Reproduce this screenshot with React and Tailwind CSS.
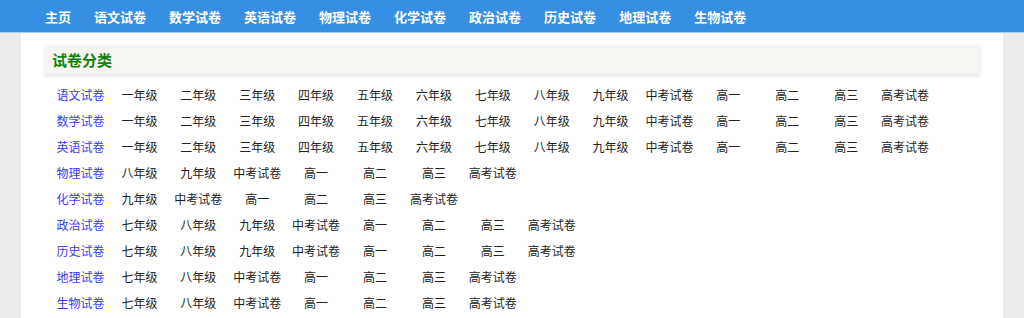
const navItems = ['主页', '语文试卷', '数学试卷', '英语试卷', '物理试卷', '化学试卷', '政治试卷', '历史试卷', '地理试卷', '生物试卷'];

const primary = ['一年级', '二年级', '三年级', '四年级', '五年级', '六年级', '七年级', '八年级', '九年级', '中考试卷', '高一', '高二', '高三', '高考试卷'];
const high = ['中考试卷', '高一', '高二', '高三', '高考试卷'];

const categories = [
  { name: '语文试卷', items: primary },
  { name: '数学试卷', items: primary },
  { name: '英语试卷', items: primary },
  { name: '物理试卷', items: ['八年级', '九年级', ...high] },
  { name: '化学试卷', items: ['九年级', ...high] },
  { name: '政治试卷', items: ['七年级', '八年级', '九年级', ...high] },
  { name: '历史试卷', items: ['七年级', '八年级', '九年级', ...high] },
  { name: '地理试卷', items: ['七年级', '八年级', ...high] },
  { name: '生物试卷', items: ['七年级', '八年级', ...high] },
];

const font = { fontFamily: '"Noto Sans CJK SC", "Noto Sans", sans-serif' };

export default function App() {
  return (
    <div className="min-h-[318px] bg-[#ebebeb]" style={font}>
      <nav className="h-[33px] bg-[#378ee5] border-b border-[#a8cff3]">
        <ul className="flex h-full items-center pl-[45px] gap-[23px]">
          {navItems.map((item) => (
            <li key={item} className="text-[13px] font-bold text-white leading-none">
              {item}
            </li>
          ))}
        </ul>
      </nav>

      <main className="ml-[21px] w-[982px] bg-white pt-[12px] pl-[24px] pb-4">
        <div className="w-[935px] h-[29px] bg-[#f5f6f1] shadow-[0_2px_4px_rgba(0,0,0,0.12)] flex items-center pl-[7px]">
          <h2 className="text-[15px] font-bold text-[#16800f] leading-none">试卷分类</h2>
        </div>

        <div className="mt-[8px] pl-[6px]">
          {categories.map((cat) => (
            <div key={cat.name} className="flex h-[26px] items-center text-[12px] leading-none">
              <a className="w-[59px] text-center text-[#3a3af5]">{cat.name}</a>
              {cat.items.map((item, i) => (
                <a key={i} className="w-[58.9px] text-center text-[#222]">
                  {item}
                </a>
              ))}
            </div>
          ))}
        </div>
      </main>
    </div>
  );
}
